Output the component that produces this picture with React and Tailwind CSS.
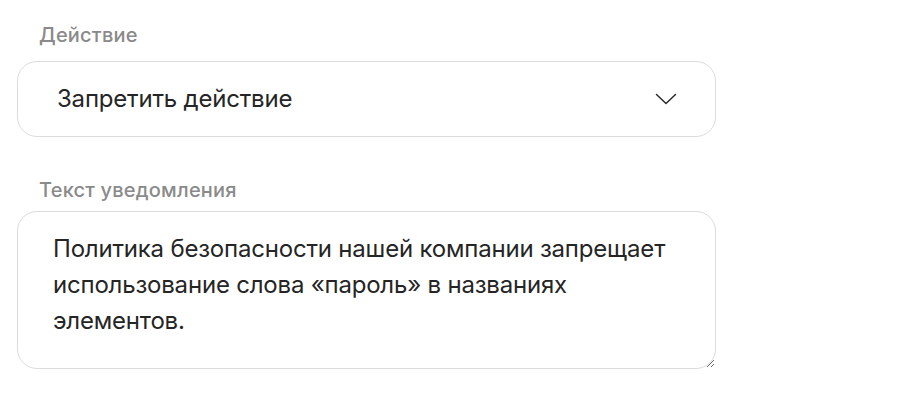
import React from "react";

export default function App() {
  return (
    <div className="w-[918px] h-[398px] bg-white" style={{ fontFamily: "Inter, 'Noto Sans', sans-serif" }}>
      <div className="pl-[17px] pt-[22px] w-[716px]">
        <div className="pl-[22px] text-[20px] leading-[26px] font-medium tracking-[0.2px] text-[#8a8a8a]">Действие</div>
        <div className="mt-[13px] h-[76px] rounded-[20px] border border-[#dcdcdc] flex items-center justify-between pl-[39px] pr-[38px]">
          <span className="text-[24px] text-[#252525] tracking-[-0.2px]">Запретить действие</span>
          <svg width="22" height="12" viewBox="0 0 22 12" fill="none" stroke="#2a2a2a" strokeWidth="1.5" strokeLinecap="round" strokeLinejoin="round">
            <path d="M1.5 1.5 L11 10.5 L20.5 1.5" />
          </svg>
        </div>
        <div className="mt-[40px] pl-[22px] text-[20px] leading-[26px] font-medium tracking-[0.2px] text-[#8a8a8a]">Текст уведомления</div>
        <textarea
          className="mt-[8px] block w-full h-[158px] rounded-[20px] border border-[#dcdcdc] pl-[35px] pr-[36px] pt-[19px] text-[24px] leading-[36px] text-[#252525] tracking-[-0.2px] outline-none"
          style={{ fontFamily: "Inter, 'Noto Sans', sans-serif" }}
          defaultValue="Политика безопасности нашей компании запрещает использование слова «пароль» в названиях элементов."
        />
      </div>
    </div>
  );
}
